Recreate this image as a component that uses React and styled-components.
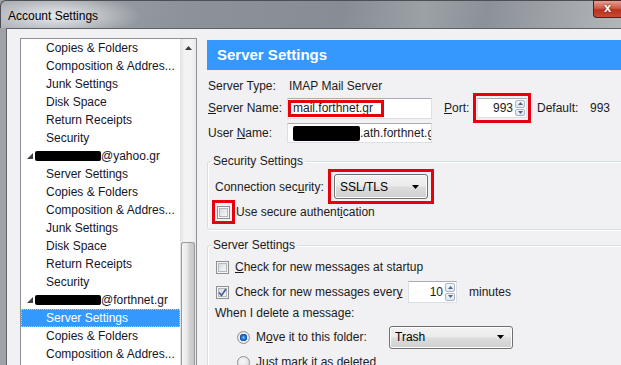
import React from 'react';
import styled, { createGlobalStyle } from 'styled-components';

const treeRows = [
  { label: 'Copies & Folders' },
  { label: 'Composition & Addres...' },
  { label: 'Junk Settings' },
  { label: 'Disk Space' },
  { label: 'Return Receipts' },
  { label: 'Security' },
  { account: '@yahoo.gr' },
  { label: 'Server Settings' },
  { label: 'Copies & Folders' },
  { label: 'Composition & Addres...' },
  { label: 'Junk Settings' },
  { label: 'Disk Space' },
  { label: 'Return Receipts' },
  { label: 'Security' },
  { account: '@forthnet.gr' },
  { label: 'Server Settings', selected: true },
  { label: 'Copies & Folders' },
  { label: 'Composition & Addres...' },
];

const GlobalStyle = createGlobalStyle`
  html, body {
    margin: 0;
    padding: 0;
    background: #f1f0f3;
  }
  body {
    font-family: "Liberation Sans", Arial, sans-serif;
    font-size: 12px;
    color: #1b1b1b;
  }
`;

const Triangle = ({ up }) => (
  <svg width='7' height='4' viewBox='0 0 7 4'>
    <polygon points={up ? '0,4 7,4 3.5,0' : '0,0 7,0 3.5,4'} fill='currentColor' />
  </svg>
);

const Spinner = () => (
  <SpinBox>
    <SpinButton>
      <Triangle up />
    </SpinButton>
    <SpinButton>
      <Triangle />
    </SpinButton>
  </SpinBox>
);

const Check = ({ checked }) => (
  <CheckBox>
    {checked && (
      <svg width='9' height='9' viewBox='0 0 9 9'>
        <path d='M1 4.5 L3.5 7.5 L8 1' fill='none' stroke='#3d5a96' strokeWidth='1.6' />
      </svg>
    )}
  </CheckBox>
);

const MenuList = ({ value, width, height }) => (
  <MenuButton $width={width} $height={height}>
    <span>{value}</span>
    <Triangle />
  </MenuButton>
);

const TreeRow = ({ row }) =>
  row.account ? (
    <Row>
      <Twisty>
        <svg width='6' height='6' viewBox='0 0 6 6'>
          <polygon points='6,0 6,6 0,6' fill='#404040' />
        </svg>
      </Twisty>
      <Redacted $width={66} $height={10} />
      {row.account}
    </Row>
  ) : (
    <Row $child $selected={row.selected}>
      {row.label}
    </Row>
  );

const App = () => (
  <Window>
    <GlobalStyle />
    <TitleBar>
      <Title>Account Settings</Title>
      <CloseButton>x</CloseButton>
    </TitleBar>
    <Frame>
      <Content>
        <Tree>
          <TreeList>
            {treeRows.map((row, i) => (
              <TreeRow key={i} row={row} />
            ))}
          </TreeList>
          <ScrollBar>
            <ScrollArrow>
              <Triangle up />
            </ScrollArrow>
            <ScrollGap />
            <Thumb />
          </ScrollBar>
        </Tree>

        <Pane>
          <Header>Server Settings</Header>

          <InfoRow $height={15} $top={8}>
            <Label $width={79}>Server Type:</Label>
            <Value>IMAP Mail Server</Value>
          </InfoRow>

          <InfoRow $height={30}>
            <Label $width={79}>
              <Key>S</Key>erver Name:
            </Label>
            <TextInput $width={145} $height={21}>
              mail.forthnet.gr
              <Highlight $width={96} $height={17} />
            </TextInput>
            <Label $width={29} $gap={12}>
              <Key>P</Key>ort:
            </Label>
            <Marked $pad='2px 1px'>
              <NumberInput $width={50} $height={20}>
                <NumberText>993</NumberText>
                <Spinner />
              </NumberInput>
            </Marked>
            <Label $width={51} $gap={6}>Default:</Label>
            <Value>993</Value>
          </InfoRow>

          <InfoRow $height={20}>
            <Label $width={79}>
              User <Key>N</Key>ame:
            </Label>
            <TextInput $width={145} $height={20}>
              <Redacted $width={67} $height={15} />
              .ath.forthnet.gr
            </TextInput>
          </InfoRow>

          <Group $top={10}>
            <Legend>Security Settings</Legend>
            <FieldRow $height={35}>
              <Label $width={113}>
                Connection sec<Key>u</Key>rity:
              </Label>
              <Marked $pad='2px 3px'>
                <MenuList value='SSL/TLS' width={94} height={25} />
              </Marked>
            </FieldRow>
            <FieldRow $height={24} $top={-4}>
              <Marked $pad='3px 2px 2px 2px' $shift={-3}>
                <Check />
              </Marked>
              <CheckLabel $gap={1}>
                Use secure authent<Key>i</Key>cation
              </CheckLabel>
            </FieldRow>
          </Group>

          <Group $top={7}>
            <Legend>Server Settings</Legend>
            <FieldRow $height={20} $top={4}>
              <Indent $left={1}>
                <Check />
              </Indent>
              <CheckLabel $gap={6}>
                <Key>C</Key>heck for new messages at startup
              </CheckLabel>
            </FieldRow>
            <FieldRow $height={26} $top={2}>
              <Indent $left={1}>
                <Check checked />
              </Indent>
              <CheckLabel $gap={6} $width={173}>
                Check for new messages ever<Key>y</Key>
              </CheckLabel>
              <NumberInput $width={49} $height={22}>
                <NumberText>10</NumberText>
                <Spinner />
              </NumberInput>
              <CheckLabel $gap={12}>minutes</CheckLabel>
            </FieldRow>
            <FieldRow $height={16}>
              <span>When I delete a message:</span>
            </FieldRow>
            <FieldRow $height={28} $top={2}>
              <Indent $left={22}>
                <Radio $selected />
              </Indent>
              <CheckLabel $gap={6} $width={133}>
                M<Key>o</Key>ve it to this folder:
              </CheckLabel>
              <MenuList value='Trash' width={124} height={23} />
            </FieldRow>
            <FieldRow $height={22}>
              <Indent $left={22}>
                <Radio />
              </Indent>
              <CheckLabel $gap={6}>
                <Key>J</Key>ust mark it as deleted
              </CheckLabel>
            </FieldRow>
          </Group>
        </Pane>
      </Content>
    </Frame>
  </Window>
);

const Window = styled.div`
  width: 621px;
  height: 365px;
  overflow: hidden;
  display: flex;
  flex-direction: column;
  background: #9fa3a8;
`;

const TitleBar = styled.div`
  flex: none;
  height: 28px;
  display: flex;
  justify-content: space-between;
  align-items: flex-start;
  box-sizing: border-box;
  border-top: 1px solid #4c5056;
  border-left: 1px solid #4c5056;
  border-top-left-radius: 6px;
  background:
    radial-gradient(ellipse 85px 22px at 55px 15px, rgba(232, 234, 237, 1), rgba(232, 234, 237, 0) 100%),
    linear-gradient(100deg, #a3a7ad 0%, #8d9299 30%, #888d95 55%, #9ca1a6 68%, #8c9198 78%, #b2b6b9 100%);
`;

const Title = styled.div`
  padding: 2px 0 0 7px;
  line-height: 27px;
  color: #000;
`;

const CloseButton = styled.div`
  width: 28px;
  height: 18px;
  margin-top: -1px;
  box-sizing: border-box;
  border: 1px solid #4a2320;
  border-right: none;
  border-bottom-left-radius: 4px;
  background: linear-gradient(180deg, #e3a094 0%, #cf5a47 45%, #b8321f 55%, #c84a33 100%);
  color: #fff;
  font-weight: bold;
  font-size: 13px;
  line-height: 14px;
  text-align: center;
  text-shadow: 0 0 2px #5a0f05;
`;

const Frame = styled.div`
  flex: 1;
  display: flex;
  padding-left: 6px;
  min-height: 0;
`;

const Content = styled.div`
  flex: 1;
  display: flex;
  align-items: flex-start;
  padding: 9px 0 0 13px;
  background: #f1f0f3;
  border-top: 1px solid #5e6268;
  border-left: 1px solid #5e6268;
  overflow: hidden;
`;

const Tree = styled.div`
  flex: none;
  width: 177px;
  height: 340px;
  box-sizing: border-box;
  display: flex;
  background: #fff;
  border: 1px solid #8d9096;
`;

const TreeList = styled.div`
  flex: 1;
  display: flex;
  flex-direction: column;
`;

const Row = styled.div`
  height: 18px;
  box-sizing: border-box;
  display: flex;
  align-items: center;
  white-space: nowrap;
  padding-left: ${p => (p.$child ? '24px' : '5px')};
  color: ${p => (p.$selected ? '#fff' : '#15152a')};
  background: ${p => (p.$selected ? '#3399ff' : 'transparent')};
  border: 1px dotted ${p => (p.$selected ? '#f2c27a' : 'transparent')};
`;

const Twisty = styled.span`
  display: inline-flex;
  width: 7px;
  margin-right: 1px;
`;

const Redacted = styled.span`
  display: inline-block;
  flex: none;
  width: ${p => p.$width}px;
  height: ${p => p.$height}px;
  background: #000;
  border-radius: 2px;
`;

const ScrollBar = styled.div`
  flex: none;
  width: 16px;
  display: flex;
  flex-direction: column;
  background: linear-gradient(90deg, #e2e2e4 0%, #f3f3f3 30%, #f3f3f3 70%, #e8e8ea 100%);
`;

const ScrollArrow = styled.div`
  height: 17px;
  display: flex;
  align-items: center;
  justify-content: center;
  color: #3c3c3c;
`;

const ScrollGap = styled.div`
  flex: 0 0 186px;
`;

const Thumb = styled.div`
  flex: 1;
  margin: 0 1px;
  border: 1px solid #9a9a9c;
  border-bottom: none;
  border-radius: 3px 3px 0 0;
  background: linear-gradient(90deg, #f6f6f6 0%, #e6e6e6 45%, #d2d2d4 60%, #c6c6c8 100%);
`;

const Pane = styled.div`
  flex: none;
  width: 430px;
  margin: 2px 0 0 10px;
  display: flex;
  flex-direction: column;
`;

const Header = styled.div`
  height: 30px;
  line-height: 30px;
  padding-left: 10px;
  background: #3399ff;
  color: #fff;
  font-size: 15px;
  font-weight: bold;
`;

const InfoRow = styled.div`
  height: ${p => p.$height}px;
  margin-top: ${p => p.$top || 0}px;
  display: flex;
  align-items: center;
  padding-left: 1px;
  white-space: nowrap;
`;

const Label = styled.span`
  flex: none;
  width: ${p => p.$width}px;
  margin-left: ${p => p.$gap || 0}px;
`;

const Value = styled.span`
  margin-left: 2px;
`;

const Key = styled.u`
  text-decoration: underline;
`;

const TextInput = styled.div`
  position: relative;
  flex: none;
  width: ${p => p.$width}px;
  height: ${p => p.$height}px;
  box-sizing: border-box;
  display: flex;
  align-items: center;
  padding-left: 5px;
  overflow: hidden;
  white-space: nowrap;
  background: #fff;
  border: 1px solid #dbdfe6;
  border-top-color: #abadb3;
`;

const Highlight = styled.span`
  position: absolute;
  left: 0;
  top: 1px;
  width: ${p => p.$width}px;
  height: ${p => p.$height}px;
  box-sizing: border-box;
  border: 3px solid #e6000e;
`;

const Marked = styled.div`
  flex: none;
  display: flex;
  padding: ${p => p.$pad};
  margin-left: ${p => p.$shift || 0}px;
  border: 3px solid #e6000e;
`;

const NumberInput = styled.div`
  flex: none;
  width: ${p => p.$width}px;
  height: ${p => p.$height}px;
  box-sizing: border-box;
  display: flex;
  align-items: center;
  background: #fff;
  border: 1px solid #dbdfe6;
  border-top-color: #abadb3;
`;

const NumberText = styled.span`
  flex: 1;
  text-align: right;
  padding-right: 2px;
`;

const SpinBox = styled.div`
  flex: none;
  width: 10px;
  align-self: stretch;
  display: flex;
  flex-direction: column;
  gap: 1px;
  padding: 1px 1px 1px 0;
`;

const SpinButton = styled.div`
  flex: 1;
  display: flex;
  align-items: center;
  justify-content: center;
  border: 1px solid #a9b3c2;
  border-radius: 2px;
  background: linear-gradient(180deg, #f6f8fb 0%, #dfe6ef 100%);
  color: #4f6388;
  svg {
    width: 5px;
    height: 3px;
  }
`;

const Group = styled.fieldset`
  margin: ${p => p.$top}px 0 0 0;
  padding: 0 0 5px 7px;
  min-width: 0;
  border: 1px solid #d5dfe5;
  border-radius: 3px;
  box-shadow: inset 1px 1px 0 #fff, 1px 1px 0 #fff;
`;

const Legend = styled.legend`
  padding: 0 2px;
  margin-left: -4px;
  line-height: 16px;
  color: #1b1b1b;
`;

const FieldRow = styled.div`
  height: ${p => p.$height}px;
  margin-top: ${p => p.$top || 0}px;
  display: flex;
  align-items: center;
  white-space: nowrap;
`;

const MenuButton = styled.div`
  flex: none;
  width: ${p => p.$width}px;
  height: ${p => p.$height}px;
  box-sizing: border-box;
  display: flex;
  align-items: center;
  justify-content: space-between;
  padding: 0 8px 0 5px;
  border: 1px solid #707070;
  border-radius: 3px;
  background: linear-gradient(180deg, #f2f2f2 0%, #ebebeb 48%, #dddddd 52%, #cfcfcf 100%);
  box-shadow: inset 0 0 0 1px #fcfcfc;
  color: #000;
`;

const CheckBox = styled.span`
  flex: none;
  width: 13px;
  height: 13px;
  box-sizing: border-box;
  display: flex;
  align-items: center;
  justify-content: center;
  border: 1px solid #8f8f8f;
  background: linear-gradient(135deg, #cdd1d6 0%, #eceef0 60%, #f8f8f8 100%);
  box-shadow: inset 0 0 0 1px #f4f4f4, inset 0 0 0 2px #b4b8be;
`;

const Radio = styled.span`
  flex: none;
  width: 13px;
  height: 13px;
  box-sizing: border-box;
  border-radius: 50%;
  border: 1px solid #8f8f8f;
  background: ${p =>
    p.$selected
      ? 'radial-gradient(circle at 50% 50%, #7fc0ff 0, #2a74d6 2px, #174d9c 3.5px, #e9edf1 4px, #dcdfe3 100%)'
      : 'radial-gradient(circle at 40% 40%, #f8f8f8 0, #d6d9dd 100%)'};
`;

const Indent = styled.span`
  display: flex;
  margin-left: ${p => p.$left}px;
`;

const CheckLabel = styled.span`
  flex: none;
  margin-left: ${p => p.$gap || 0}px;
  width: ${p => (p.$width ? `${p.$width}px` : 'auto')};
`;

export default App;
